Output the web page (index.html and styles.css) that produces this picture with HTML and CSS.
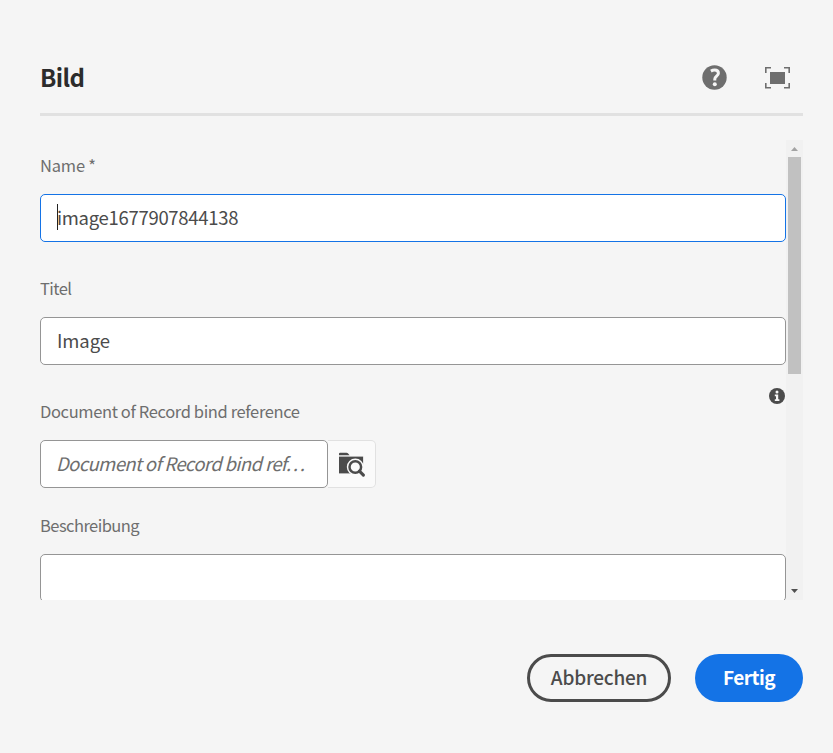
FILE: index.html
```html
<!DOCTYPE html>
<html lang="de">
<head>
<meta charset="utf-8">
<title>Bild</title>
<link rel="stylesheet" href="styles.css">
</head>
<body>
<main class="dialog">
  <header class="header">
    <h1 class="title"><span class="t-title">Bild</span></h1>
    <div class="actions">
      <svg class="icon-help" width="25" height="25" viewBox="0 0 25 25"><circle cx="12.5" cy="12.5" r="12.2" fill="#6e6e6e"/><path d="M8.9 6.1Q10.7 5.1 12.7 5.1C15.2 5.1 16.4 6.4 16.4 8.2C16.4 10.9 12.8 11.3 12.8 14V15.4" fill="none" stroke="#f5f5f5" stroke-width="3"/><circle cx="12.8" cy="19.2" r="2" fill="#f5f5f5"/></svg>
      <svg class="icon-full" width="25" height="22" viewBox="0 0 25 22"><rect x="5" y="5" width="15" height="12" fill="#6e6e6e"/><path d="M.8 6V.8H6M19 .8H24.2V6M.8 16V20.7H6M19 20.7H24.2V16" fill="none" stroke="#6e6e6e" stroke-width="1.6"/></svg>
    </div>
  </header>
  <section class="body">
    <form class="form">
      <div class="field">
        <div class="label"><span class="t-name">Name *</span></div>
        <div class="input focused"><i class="caret"></i><span class="t-value">image1677907844138</span></div>
      </div>
      <div class="field">
        <div class="label"><span class="t-label">Titel</span></div>
        <div class="input"><span class="t-image">Image</span></div>
      </div>
      <div class="field reference">
        <svg class="info" width="16" height="16" viewBox="0 0 16 16"><circle cx="8" cy="8" r="8" fill="#4b4b4b"/><circle cx="8" cy="4" r="1.5" fill="#f5f5f5"/><path d="M5.8 6.6H9.2V11.3H10.4V12.9H5.8V11.3H7V8.2H5.8Z" fill="#f5f5f5"/></svg>
        <div class="label"><span class="t-doc">Document of Record bind reference</span></div>
        <div class="picker">
          <div class="input placeholder"><span class="t-place">Document of Record bind ref…</span></div>
          <div class="browse"><svg width="27" height="26" viewBox="0 0 27 26"><path d="M0 3.2V1.8Q0 .7 1.1 .7H7.6Q8.4 .7 8.9 1.3L10.6 3.2Z" fill="#4b4b4b"/><path d="M0 4.6H24.2V21.4H0Z" fill="#4b4b4b"/><path d="M23.5 14.7A7 7 0 0 1 22.4 18.5L25 21.4H27V4.6H24.6V11.5Z" fill="#fafafa"/><circle cx="16.3" cy="15" r="8.5" fill="#fafafa"/><path d="M18.5 17.2L25 23.7" stroke="#fafafa" stroke-width="5.6"/><circle cx="16.3" cy="15" r="5.8" fill="#fafafa" stroke="#4b4b4b" stroke-width="2.5"/><path d="M20.4 19.1L24.4 23.2" stroke="#4b4b4b" stroke-width="3.1" stroke-linecap="round"/></svg></div>
        </div>
      </div>
      <div class="field">
        <div class="label"><span class="t-label">Beschreibung</span></div>
        <div class="input"></div>
      </div>
    </form>
    <div class="scrollbar">
      <svg class="up" width="7" height="4" viewBox="0 0 7 4"><path d="M0 4L3.5 0L7 4Z" fill="#a3a3a3"/></svg>
      <div class="thumb"></div>
      <svg class="down" width="7" height="4" viewBox="0 0 7 4"><path d="M0 0H7L3.5 4Z" fill="#505050"/></svg>
    </div>
  </section>
  <footer class="footer">
    <div class="button secondary"><span class="t-cancel">Abbrechen</span></div>
    <div class="button primary"><span class="t-done">Fertig</span></div>
  </footer>
</main>
</body>
</html>
```
FILE: styles.css
```css
* { box-sizing: border-box; }
body {
  margin: 0;
  background: #f5f5f5;
  font-family: "Noto Sans CJK SC", "Open Sans", sans-serif;
  color: #4b4b4b;
}
svg { display: block; flex: none; }
.dialog { height: 753px; padding: 40px 30px 0 40px; overflow: hidden; }
.header {
  height: 76px;
  display: flex;
  align-items: center;
  justify-content: space-between;
  border-bottom: 3px solid #e1e1e1;
}
.title { margin: 0; font-size: 24px; line-height: 36px; font-weight: 700; color: #2c2c2c; letter-spacing: -0.55px; }
.actions { display: flex; align-items: center; gap: 38px; padding: 2px 13px 0 0; }
.body { display: flex; height: 460px; margin-top: 24px; overflow: hidden; }
.form { width: 746px; flex: none; }
.field { height: 123px; }
.reference { height: 114px; position: relative; }
.label { height: 54px; padding-top: 13px; font-size: 16.5px; line-height: 24px; color: #6e6e6e; white-space: nowrap; }
.t-name { letter-spacing: -0.2px; }
.t-label { letter-spacing: -0.55px; }
.t-doc { letter-spacing: -0.37px; }
.t-value { letter-spacing: -0.3px; }
.t-image { letter-spacing: -0.1px; }
.t-place { letter-spacing: -0.62px; }
.t-cancel { letter-spacing: -0.2px; }
.t-done { letter-spacing: -0.5px; }
.input {
  height: 48px;
  padding: 0 16px 2px;
  display: flex;
  align-items: center;
  border: 1px solid #959595;
  border-radius: 5px;
  background: #fff;
  font-size: 18.5px;
  line-height: 28px;
  white-space: nowrap;
}
.focused { border-color: #1473e6; }
.caret { width: 1px; height: 26px; margin: 0 -1px 0 0; background: #222; }
.info { position: absolute; right: 1px; top: 1.5px; }
.picker { display: flex; }
.placeholder { width: 288px; padding-left: 15px; font-style: italic; color: #6e6e6e; }
.browse {
  width: 48px;
  height: 48px;
  padding: 11px 0 0 11px;
  border: 1px solid #e1e1e1;
  border-left: 0;
  border-radius: 0 5px 5px 0;
  background: #fafafa;
}
.scrollbar {
  width: 17px;
  height: 460px;
  background: #f1f1f1;
  display: flex;
  flex-direction: column;
  align-items: center;
}
.up { margin-top: 7px; }
.thumb { width: 13px; height: 217px; margin-top: 6px; background: #c1c1c1; }
.down { margin: auto 0 7px; }
.footer { display: flex; justify-content: flex-end; gap: 24px; margin-top: 54px; }
.button {
  height: 48px;
  padding-bottom: 2px;
  border-radius: 24px;
  display: flex;
  align-items: center;
  justify-content: center;
  font-size: 19px;
  line-height: 28px;
  font-weight: 700;
}
.secondary { width: 144px; border: 3px solid #4b4b4b; font-weight: 500; }
.primary { width: 108px; background: #1473e6; color: #fff; }
```
